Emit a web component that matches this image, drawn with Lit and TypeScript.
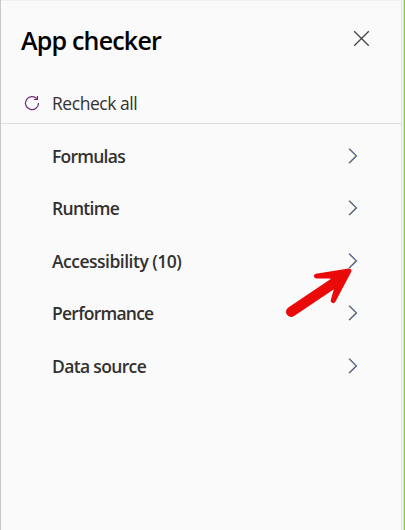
import { LitElement, html, css } from "lit";
import { customElement, property } from "lit/decorators.js";

interface Category { label: string; spacing: number; }

const categories: Category[] = [
  { label: "Formulas", spacing: -0.75 },
  { label: "Runtime", spacing: -0.7 },
  { label: "Accessibility (10)", spacing: -0.5 },
  { label: "Performance", spacing: -0.75 },
  { label: "Data source", spacing: -0.65 },
];

@customElement("checker-row")
export class CheckerRow extends LitElement {
  @property() label = "";
  @property({ type: Number }) spacing = 0;

  static styles = css`
    :host { display: flex; align-items: center; justify-content: space-between; height: 52px; padding: 0 43px 0 51px; }
    .label { font-size: 17.5px; line-height: 24px; font-weight: 600; color: #323130; white-space: nowrap; }
    .chevron { display: block; width: 12px; height: 18px; }
  `;

  render() {
    return html`
      <span class="label" style="letter-spacing:${this.spacing}px">${this.label}</span>
      <svg class="chevron" viewBox="0 0 12 18" fill="none">
        <path d="M2.4 1.9 9.4 8.9 2.4 15.9" stroke="#e5ab62" stroke-width=".7" />
        <path d="M3.2 1.6 10.5 8.9 3.2 16.2" stroke="#30508c" stroke-width="1.1" />
      </svg>`;
  }
}

@customElement("app-root")
export class AppRoot extends LitElement {
  static styles = css`
    :host { display: block; position: relative; height: 530px; overflow: hidden; background: #fafafa; font-family: "Open Sans", "Noto Sans", sans-serif; }
    .frame { display: flex; box-sizing: border-box; height: 530px; border-left: 1px solid #c8c8c8; }
    .panel { flex: 1; box-sizing: border-box; border-top: 1px solid #f0f0f0; border-right: 1px solid #e1e1e1; }
    .gutter { width: 1px; background: #f5f4f5; }
    .edge { width: 1px; background: #84c63a; border-left: 1px solid #d5ebbb; }
    .header { display: flex; align-items: center; justify-content: space-between; height: 78px; padding: 0 31px 0 20px; }
    .title { margin: 0; font-size: 25px; line-height: 34px; font-weight: 600; letter-spacing: -0.8px; color: #000; white-space: nowrap; }
    .close { width: 17px; height: 17px; margin-bottom: 4px; }
    .toolbar { display: flex; align-items: center; box-sizing: border-box; height: 45px; padding: 4px 0 0 23px; border-bottom: 1px solid #dedede; }
    .refresh { width: 16px; height: 16px; margin-right: 12px; }
    .action { font-size: 17.5px; line-height: 24px; letter-spacing: -0.45px; color: #323130; white-space: nowrap; }
    .list { display: grid; grid-template-rows: 52px 53px 52px 53px 52px; padding-top: 6px; }
    .pointer { position: absolute; left: 280px; top: 260px; width: 80px; height: 65px; }
  `;

  render() {
    return html`
      <div class="frame">
        <div class="panel">
          <div class="header">
            <h1 class="title">App checker</h1>
            <svg class="close" viewBox="0 0 17 17"><path d="M1.2 1.2 15.8 15.8M15.8 1.2 1.2 15.8" stroke="#444" stroke-width="1.3" /></svg>
          </div>
          <div class="toolbar">
            <svg class="refresh" viewBox="0 0 16 16" fill="none" stroke="#742774" stroke-width="1.2">
              <path d="M12.8 3.7A6.5 6.5 0 1 0 14.5 8" /><path d="M13.4 1V4.5H10" />
            </svg>
            <span class="action">Recheck all</span>
          </div>
          <div class="list">
            ${categories.map((c) => html`<checker-row .label=${c.label} .spacing=${c.spacing}></checker-row>`)}
          </div>
        </div>
        <div class="gutter"></div>
        <div class="edge"></div>
      </div>
      <svg class="pointer" viewBox="280 260 80 65" stroke="#ea0a0a" stroke-linecap="round" stroke-linejoin="round">
        <path d="M291.2 311.7 337 281" stroke-width="10.4" />
        <path d="M316.4 276.1 348.9 270.9 333.2 300.6 338.5 282 331 276Z" fill="#ea0a0a" stroke-width="5" />
      </svg>`;
  }
}
